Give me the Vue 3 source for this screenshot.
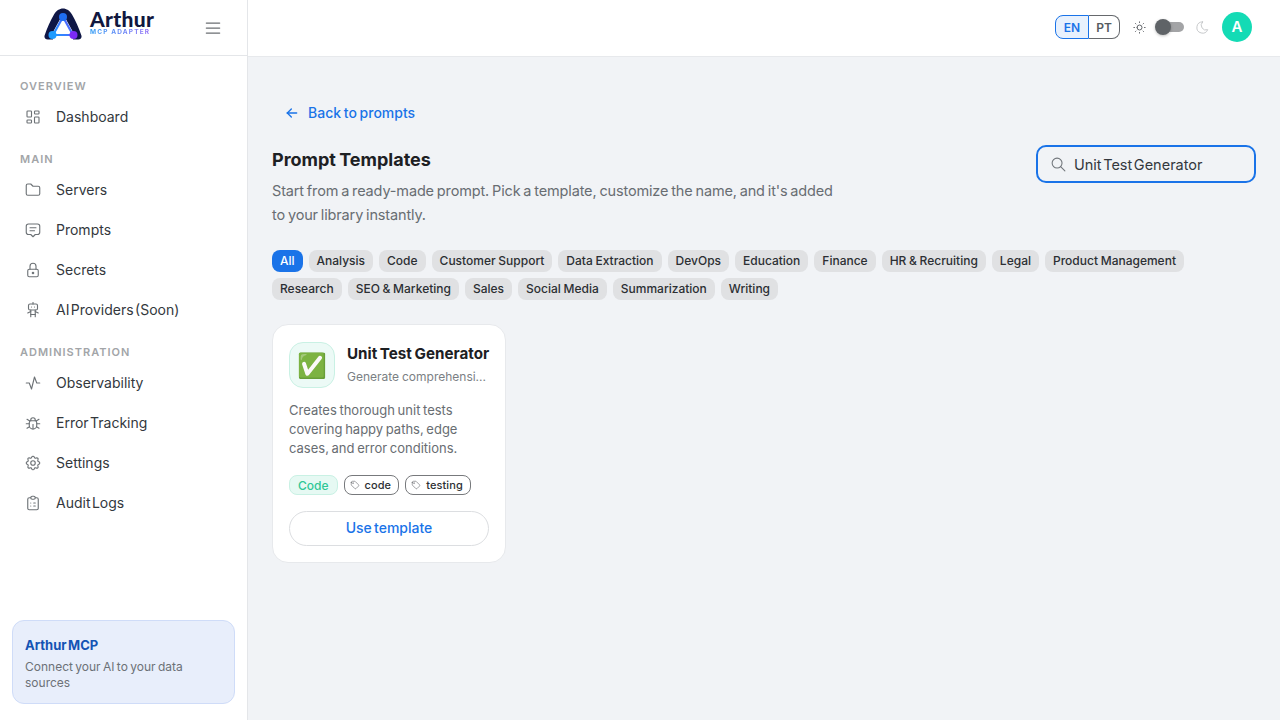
<script setup>
const icons = {
  dashboard: ['M5 4h4a1 1 0 0 1 1 1v6a1 1 0 0 1 -1 1h-4a1 1 0 0 1 -1 -1v-6a1 1 0 0 1 1 -1', 'M5 16h4a1 1 0 0 1 1 1v2a1 1 0 0 1 -1 1h-4a1 1 0 0 1 -1 -1v-2a1 1 0 0 1 1 -1', 'M15 12h4a1 1 0 0 1 1 1v6a1 1 0 0 1 -1 1h-4a1 1 0 0 1 -1 -1v-6a1 1 0 0 1 1 -1', 'M15 4h4a1 1 0 0 1 1 1v2a1 1 0 0 1 -1 1h-4a1 1 0 0 1 -1 -1v-2a1 1 0 0 1 1 -1'],
  folder: ['M5 4h4l3 3h7a2 2 0 0 1 2 2v8a2 2 0 0 1 -2 2h-14a2 2 0 0 1 -2 -2v-11a2 2 0 0 1 2 -2'],
  message: ['M8 9h8', 'M8 13h6', 'M9 18h-3a3 3 0 0 1 -3 -3v-8a3 3 0 0 1 3 -3h12a3 3 0 0 1 3 3v8a3 3 0 0 1 -3 3h-3l-3 3l-3 -3z'],
  lock: ['M5 13a2 2 0 0 1 2 -2h10a2 2 0 0 1 2 2v6a2 2 0 0 1 -2 2h-10a2 2 0 0 1 -2 -2v-6z', 'M11 16a1 1 0 1 0 2 0a1 1 0 0 0 -2 0', 'M8 11v-4a4 4 0 1 1 8 0v4'],
  robot: ['M6 6a2 2 0 0 1 2 -2h8a2 2 0 0 1 2 2v4a2 2 0 0 1 -2 2h-8a2 2 0 0 1 -2 -2z', 'M12 2v2', 'M9 12v9', 'M15 12v9', 'M5 16l4 -2', 'M15 14l4 2', 'M9 18h6', 'M10 8v.01', 'M14 8v.01'],
  activity: ['M3 12h4l3 8l4 -16l3 8h4'],
  bug: ['M9 9v-1a3 3 0 0 1 6 0v1', 'M8 9h8a6 6 0 0 1 1 3v3a5 5 0 0 1 -10 0v-3a6 6 0 0 1 1 -3', 'M3 13l4 0', 'M17 13l4 0', 'M12 20l0 -6', 'M4 19l3.35 -2', 'M20 19l-3.35 -2', 'M4 7l3.75 2.4', 'M20 7l-3.75 2.4'],
  settings: ['M10.325 4.317c.426 -1.756 2.924 -1.756 3.35 0a1.724 1.724 0 0 0 2.573 1.066c1.543 -.94 3.31 .826 2.37 2.37a1.724 1.724 0 0 0 1.065 2.572c1.756 .426 1.756 2.924 0 3.35a1.724 1.724 0 0 0 -1.066 2.573c.94 1.543 -.826 3.31 -2.37 2.37a1.724 1.724 0 0 0 -2.572 1.065c-.426 1.756 -2.924 1.756 -3.35 0a1.724 1.724 0 0 0 -2.573 -1.066c-1.543 .94 -3.31 -.826 -2.37 -2.37a1.724 1.724 0 0 0 -1.065 -2.572c-1.756 -.426 -1.756 -2.924 0 -3.35a1.724 1.724 0 0 0 1.066 -2.573c-.94 -1.543 .826 -3.31 2.37 -2.37c1 .608 2.296 .07 2.572 -1.065z', 'M9 12a3 3 0 1 0 6 0a3 3 0 0 0 -6 0'],
  clipboard: ['M9 5h-2a2 2 0 0 0 -2 2v12a2 2 0 0 0 2 2h10a2 2 0 0 0 2 -2v-12a2 2 0 0 0 -2 -2h-2', 'M9 5a2 2 0 0 1 2 -2h2a2 2 0 0 1 2 2a2 2 0 0 1 -2 2h-2a2 2 0 0 1 -2 -2z', 'M9 12l.01 0', 'M13 12l2 0', 'M9 16l.01 0', 'M13 16l2 0'],
  tag: ['M6.5 7.5a1 1 0 1 0 2 0a1 1 0 1 0 -2 0', 'M3 6v5.172a2 2 0 0 0 .586 1.414l7.71 7.71a2.41 2.41 0 0 0 3.408 0l5.592 -5.592a2.41 2.41 0 0 0 0 -3.408l-7.71 -7.71a2 2 0 0 0 -1.414 -.586h-5.172a3 3 0 0 0 -3 3z'],
  sun: ['M8 12a4 4 0 1 0 8 0a4 4 0 1 0 -8 0', 'M3 12h1m8 -9v1m8 8h1m-9 8v1m-6.4 -15.4l.7 .7m12.1 -.7l-.7 .7m0 11.4l.7 .7m-12.1 -.7l-.7 .7'],
  moon: ['M12 3c.132 0 .263 0 .393 0a7.5 7.5 0 0 0 7.92 12.446a9 9 0 1 1 -8.313 -12.454z'],
  search: ['M3 10a7 7 0 1 0 14 0a7 7 0 1 0 -14 0', 'M21 21l-6 -6'],
  back: ['M5 12l14 0', 'M5 12l6 6', 'M5 12l6 -6'],
  menu: ['M4 6l16 0', 'M4 12l16 0', 'M4 18l16 0']
}

const navSections = [
  { title: 'OVERVIEW', items: [{ label: 'Dashboard', icon: 'dashboard' }] },
  {
    title: 'MAIN',
    items: [
      { label: 'Servers', icon: 'folder' },
      { label: 'Prompts', icon: 'message' },
      { label: 'Secrets', icon: 'lock' },
      { label: 'AI Providers (Soon)', icon: 'robot' }
    ]
  },
  {
    title: 'ADMINISTRATION',
    items: [
      { label: 'Observability', icon: 'activity' },
      { label: 'Error Tracking', icon: 'bug' },
      { label: 'Settings', icon: 'settings' },
      { label: 'Audit Logs', icon: 'clipboard' }
    ]
  }
]

const categories = ['All', 'Analysis', 'Code', 'Customer Support', 'Data Extraction', 'DevOps', 'Education', 'Finance', 'HR & Recruiting', 'Legal', 'Product Management', 'Research', 'SEO & Marketing', 'Sales', 'Social Media', 'Summarization', 'Writing']
</script>

<template>
  <div class="layout">
    <aside class="sidebar">
      <div class="sidebar__brand">
        <div class="logo">
          <svg class="logo__mark" width="38" height="32" viewBox="0 0 38 32" fill="none">
            <defs>
              <linearGradient id="logo-line" x1="8" y1="28" x2="30" y2="14" gradientUnits="userSpaceOnUse">
                <stop offset="0" stop-color="#1e9bff" />
                <stop offset="1" stop-color="#5a5cff" />
              </linearGradient>
            </defs>
            <path d="M0.6 27.5C3 20 6.5 12.5 10 6.5C12 2.8 15.5 0.5 19 0.5C22.5 0.5 26 2.8 28 6.5C31.5 12.5 35 20 37.4 27.5C38.2 30 36 32 33.5 31.5L30 31.5L4.5 31.5C2 32 -0.2 30 0.6 27.5Z" fill="#0f1746" />
            <path d="M19 10L10 26.5H28Z" fill="#fff" stroke="#fff" stroke-width="4" stroke-linejoin="round" />
            <rect x="9" y="27" width="20" height="5" fill="#fff" />
            <path d="M19 9L9 27H29Z" fill="#fff" stroke="url(#logo-line)" stroke-width="2.2" stroke-linejoin="round" />
            <circle cx="19" cy="9" r="4" fill="#1f6df2" />
            <circle cx="8.5" cy="27" r="4" fill="#1e9bff" />
            <circle cx="29.5" cy="27" r="4" fill="#7b2bf5" />
          </svg>
          <div class="logo__text">
            <strong>Arthur</strong>
            <span>MCP ADAPTER</span>
          </div>
        </div>
        <svg class="icon sidebar__toggle" viewBox="0 0 24 24"><path v-for="d in icons.menu" :key="d" :d="d" /></svg>
      </div>

      <nav class="nav">
        <template v-for="section in navSections" :key="section.title">
          <div class="nav__title">{{ section.title }}</div>
          <a v-for="item in section.items" :key="item.label" class="nav__item">
            <svg class="icon nav__icon" viewBox="0 0 24 24"><path v-for="d in icons[item.icon]" :key="d" :d="d" /></svg>
            <span>{{ item.label }}</span>
          </a>
        </template>
      </nav>

      <div class="promo">
        <strong>Arthur MCP</strong>
        <p>Connect your AI to your data sources</p>
      </div>
    </aside>

    <div class="page">
      <header class="topbar">
        <div class="lang">
          <button class="lang__btn is-active">EN</button>
          <button class="lang__btn">PT</button>
        </div>
        <svg class="icon topbar__sun" viewBox="0 0 24 24"><path v-for="d in icons.sun" :key="d" :d="d" /></svg>
        <div class="switch"><i /></div>
        <svg class="icon topbar__moon" viewBox="0 0 24 24"><path v-for="d in icons.moon" :key="d" :d="d" /></svg>
        <div class="avatar">A</div>
      </header>

      <main class="content">
        <a class="back">
          <svg class="icon" viewBox="0 0 24 24"><path v-for="d in icons.back" :key="d" :d="d" /></svg>
          <span>Back to prompts</span>
        </a>

        <div class="head">
          <div class="head__text">
            <h1>Prompt Templates</h1>
            <p>Start from a ready-made prompt. Pick a template, customize the name, and it's added to your library instantly.</p>
          </div>
          <label class="search">
            <svg class="icon" viewBox="0 0 24 24"><path v-for="d in icons.search" :key="d" :d="d" /></svg>
            <input value="Unit Test Generator" />
          </label>
        </div>

        <div class="chips">
          <span v-for="(c, i) in categories" :key="c" class="chip" :class="{ 'is-active': i === 0 }">{{ c }}</span>
        </div>

        <div class="grid">
          <article class="card">
            <div class="card__top">
              <div class="card__emoji">✅</div>
              <div class="card__heading">
                <h3>Unit Test Generator</h3>
                <small>Generate comprehensi...</small>
              </div>
            </div>
            <p class="card__desc">Creates thorough unit tests covering happy paths, edge cases, and error conditions.</p>
            <div class="card__tags">
              <span class="cat">Code</span>
              <span class="tag">
                <svg class="icon" viewBox="0 0 24 24"><path v-for="d in icons.tag" :key="d" :d="d" /></svg>code
              </span>
              <span class="tag">
                <svg class="icon" viewBox="0 0 24 24"><path v-for="d in icons.tag" :key="d" :d="d" /></svg>testing
              </span>
            </div>
            <button class="use"><span>Use template</span></button>
          </article>
        </div>
      </main>
    </div>
  </div>
</template>

<style>
html, body {
  margin: 0;
  background: #f1f3f6;
}
</style>

<style scoped>
.layout {
  display: flex;
  height: 720px;
  overflow: hidden;
  font-family: Inter, "Noto Sans", sans-serif;
  color: #1d2023;
}

.icon {
  width: 18px;
  height: 18px;
  fill: none;
  stroke: currentColor;
  stroke-width: 1.5;
  stroke-linecap: round;
  stroke-linejoin: round;
  flex: none;
}

.sidebar {
  width: 248px;
  flex: none;
  display: flex;
  flex-direction: column;
  box-sizing: border-box;
  background: #fff;
  border-right: 1px solid #e4e6e9;
}

.sidebar__brand {
  height: 56px;
  flex: none;
  display: flex;
  align-items: center;
  box-sizing: border-box;
  padding: 0 24px 0 44px;
  border-bottom: 1px solid #e4e6e9;
}

.logo {
  display: flex;
  align-items: center;
  gap: 8px;
  flex: 1;
}

.logo__mark {
  margin-top: -8px;
}

.logo__text {
  display: flex;
  flex-direction: column;
  margin-top: -10px;
}

.logo__text strong {
  color: #10183f;
  font: 900 21px/20px Lato, sans-serif;
  letter-spacing: 0.3px;
}

.logo__text span {
  background: linear-gradient(90deg, #2e9bf5, #9a6cf7);
  -webkit-background-clip: text;
  background-clip: text;
  color: transparent;
  font: 700 6.5px/7px Inter, sans-serif;
  letter-spacing: 1.15px;
}

.sidebar__toggle {
  width: 20px;
  height: 20px;
  color: #6b6f73;
}

.nav {
  flex: 1;
  padding: 22px 12px 0;
}

.nav__title {
  height: 16px;
  margin: 14px 0 3px 8px;
  color: #a2a5a8;
  font-size: 11px;
  font-weight: 600;
  line-height: 16px;
  letter-spacing: 1px;
}

.nav__title:first-child {
  margin-top: 0;
}

.nav__item {
  display: flex;
  align-items: center;
  gap: 14px;
  height: 40px;
  padding-left: 12px;
  color: #33383d;
  font-size: 14px;
  word-spacing: -2.5px;
}

.nav__item span {
  padding-bottom: 2px;
}

.nav__icon {
  color: #6d7276;
}

.promo {
  margin: 0 12px 16px;
  padding: 15px 12px 12px;
  height: 84px;
  box-sizing: border-box;
  border: 1px solid #cfdcf8;
  border-radius: 12px;
  background: #e8eefb;
}

.promo strong {
  display: block;
  color: #1453b4;
  font-size: 13px;
  font-weight: 700;
  line-height: 18px;
  word-spacing: -1.5px;
}

.promo p {
  margin: 5px 0 0;
  color: #6c7177;
  font-size: 12px;
  line-height: 16px;
  word-spacing: -1px;
}

.page {
  flex: 1;
  min-width: 0;
  display: flex;
  flex-direction: column;
}

.topbar {
  height: 57px;
  flex: none;
  display: flex;
  align-items: center;
  justify-content: flex-end;
  box-sizing: border-box;
  padding: 0 28px 2px 0;
  background: #fff;
  border-bottom: 1px solid #e7e9ec;
}

.lang {
  display: flex;
}

.lang__btn {
  height: 24px;
  width: 31px;
  padding: 0;
  border: 1px solid #66696d;
  border-left: 0;
  border-radius: 0 8px 8px 0;
  background: transparent;
  color: #555a60;
  font: 600 12px Inter, sans-serif;
}

.lang__btn.is-active {
  width: 34px;
  border: 1px solid #1a73e8;
  border-radius: 8px 0 0 8px;
  background: #e8f1fd;
  color: #1a73e8;
}

.topbar__sun {
  width: 15px;
  height: 15px;
  margin-left: 12px;
  color: #55595e;
}

.switch {
  position: relative;
  width: 27px;
  height: 10px;
  margin-left: 10px;
  border-radius: 5px;
  background: #a3a4a6;
}

.switch i {
  position: absolute;
  top: -3px;
  left: -2px;
  width: 16px;
  height: 16px;
  border-radius: 50%;
  background: #5f6367;
  box-shadow: 0 1px 3px rgba(0, 0, 0, 0.25);
}

.topbar__moon {
  width: 15px;
  height: 15px;
  margin-left: 11px;
  color: #c3c5c8;
}

.avatar {
  width: 30px;
  height: 30px;
  margin-left: 12px;
  border-radius: 50%;
  background: #14dbb5;
  color: #fff;
  font-size: 15px;
  font-weight: 600;
  line-height: 30px;
  text-align: center;
}

.content {
  flex: 1;
  padding: 40px 24px 0;
}

.back {
  display: flex;
  align-items: center;
  gap: 8px;
  height: 32px;
  margin-bottom: 16px;
  padding-left: 12px;
  color: #1a73e8;
  font-size: 14px;
  font-weight: 500;
  word-spacing: -1px;
}

.back span {
  padding-bottom: 2px;
}

.back .icon {
  width: 16px;
  height: 16px;
  stroke-width: 2;
}

.head {
  display: flex;
  justify-content: space-between;
  align-items: flex-start;
}

.head__text {
  width: 572px;
  padding-top: 1px;
}

.head h1 {
  margin: 0;
  color: #1d2023;
  font-size: 18px;
  font-weight: 700;
  line-height: 28px;
  word-spacing: -1px;
}

.head p {
  margin: 5px 0 0;
  color: #686d72;
  font-size: 14.5px;
  line-height: 24px;
  letter-spacing: -0.15px;
  word-spacing: -1px;
}

.search {
  display: flex;
  align-items: center;
  gap: 7px;
  width: 220px;
  height: 38px;
  box-sizing: border-box;
  padding: 0 12px;
  border: 2px solid #1a73e8;
  border-radius: 10px;
  color: #70757a;
}

.search .icon {
  width: 17px;
  height: 17px;
}

.search input {
  flex: 1;
  min-width: 0;
  padding: 0;
  border: 0;
  outline: 0;
  background: transparent;
  color: #33383d;
  font: 400 14.5px Inter, sans-serif;
  word-spacing: -2.5px;
}

.chips {
  display: flex;
  flex-wrap: wrap;
  gap: 6px;
  margin-top: 23px;
}

.chip {
  height: 22px;
  padding: 0 8px;
  border-radius: 8px;
  background: #e0e1e3;
  color: #2c2f33;
  font-size: 12px;
  font-weight: 500;
  line-height: 22px;
  word-spacing: -0.5px;
}

.chip.is-active {
  background: #1a73e8;
  color: #fff;
}

.grid {
  display: grid;
  grid-template-columns: 234px;
  margin-top: 24px;
}

.card {
  box-sizing: border-box;
  height: 239px;
  padding: 17px 16px;
  border: 1px solid #e7e9ec;
  border-radius: 16px;
  background: #fff;
}

.card__top {
  display: flex;
  gap: 12px;
}

.card__emoji {
  width: 46px;
  height: 46px;
  flex: none;
  box-sizing: border-box;
  border: 1px solid #c9f1e4;
  border-radius: 14px;
  background: #ecfaf6;
  font-size: 24px;
  line-height: 46px;
  text-align: center;
}

.card__heading {
  min-width: 0;
  flex: 1;
}

.card__heading h3 {
  margin: 0;
  color: #1d2023;
  font-size: 15.2px;
  font-weight: 700;
  line-height: 24px;
  white-space: nowrap;
  word-spacing: -1px;
}

.card__heading small {
  display: block;
  padding-top: 1px;
  color: #7b7f84;
  font-size: 12px;
  line-height: 20px;
  white-space: nowrap;
  word-spacing: -0.5px;
}

.card__desc {
  margin: 13px 0 0;
  color: #686d72;
  font-size: 13px;
  line-height: 19px;
  word-spacing: -1px;
}

.card__tags {
  display: flex;
  gap: 6px;
  margin-top: 17px;
}

.cat {
  height: 20px;
  box-sizing: border-box;
  padding: 0 8px;
  border: 1px solid #c9f1e4;
  border-radius: 8px;
  background: #e6f9f3;
  color: #2fc796;
  font-size: 12px;
  font-weight: 500;
  line-height: 19px;
}

.tag {
  display: flex;
  align-items: center;
  gap: 5px;
  height: 20px;
  box-sizing: border-box;
  padding: 0 7px 0 5px;
  border: 1px solid #77797c;
  border-radius: 8px;
  color: #2c2f33;
  font-size: 11px;
  font-weight: 500;
  letter-spacing: 0.1px;
}

.tag .icon {
  width: 10px;
  height: 10px;
  color: #66696d;
}

.use {
  display: block;
  width: 100%;
  height: 35px;
  margin-top: 16px;
  padding: 0 0 2px;
  border: 1px solid #dcdee1;
  border-radius: 18px;
  background: transparent;
  color: #1a73e8;
  font: 500 14px Inter, sans-serif;
  word-spacing: -1.5px;
}
</style>
